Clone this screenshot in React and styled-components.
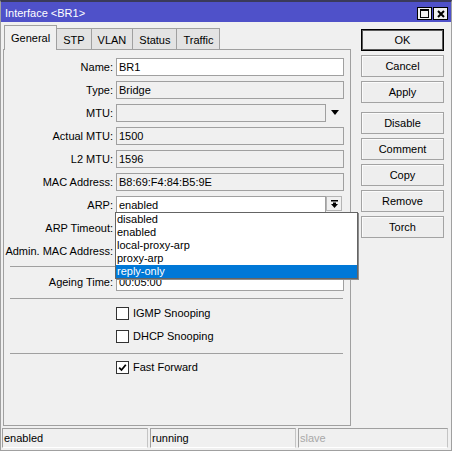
import React from "react";
import styled, { createGlobalStyle } from "styled-components";

const GlobalStyle = createGlobalStyle`
  html, body { margin: 0; padding: 0; background: #f0f0f0; }
  body {
    font-family: "Liberation Sans", Arial, sans-serif;
    font-size: 11px;
    color: #000;
  }
  * { box-sizing: border-box; }
`;

const Window = styled.div`
  width: 452px;
  height: 451px;
  background: #f0f0f0;
  border: 1px solid #a0a0a0;
  border-top: 2px solid #3a3a5a;
  display: flex;
  flex-direction: column;
`;

const TitleBar = styled.div`
  height: 20px;
  flex: none;
  background: #4f51c9;
  color: #fff;
  display: flex;
  align-items: flex-end;
  justify-content: space-between;
  padding: 0 3px 2px 4px;
`;

const Title = styled.span`
  line-height: 14px;
`;

const TitleButtons = styled.div`
  display: flex;
  gap: 1px;
`;

const TitleButton = styled.div`
  width: 15px;
  height: 13px;
  background: #f0f0f0;
  border: 1px solid #000;
  display: flex;
  align-items: center;
  justify-content: center;
`;

const Body = styled.div`
  flex: none;
  display: flex;
  padding: 3px 0 0 2px;
`;

const LeftColumn = styled.div`
  width: 348px;
  display: flex;
  flex-direction: column;
`;

const TabBar = styled.div`
  height: 24px;
  display: flex;
  align-items: flex-end;
  padding-left: 2px;
`;

const Tab = styled.div`
  height: ${(p) => (p.$active ? 25 : 21)}px;
  margin-bottom: ${(p) => (p.$active ? -1 : 0)}px;
  margin-left: -1px;
  padding: ${(p) => (p.$active ? "0 6px" : "2px 6px 0")};
  border: 1px solid #a0a0a0;
  border-bottom: none;
  background: ${(p) => (p.$active ? "#f0f0f0" : "#e3e3e3")};
  display: flex;
  align-items: center;
  white-space: nowrap;
  position: relative;
  z-index: ${(p) => (p.$active ? 2 : 1)};
`;

const Panel = styled.div`
  height: 377px;
  border: 1px solid #a0a0a0;
  padding-top: 8px;
  display: flex;
  flex-direction: column;
  gap: 5px;
`;

const Row = styled.div`
  display: flex;
  align-items: flex-start;
  height: 18px;
`;

const Label = styled.div`
  width: 109px;
  margin-right: 3px;
  text-align: right;
  line-height: 18px;
  white-space: nowrap;
`;

const FieldArea = styled.div`
  width: 228px;
  display: flex;
  align-items: flex-start;
  position: relative;
`;

const Field = styled.div`
  flex: 1;
  height: 18px;
  border: 1px solid #a0a0a0;
  background: ${(p) => (p.$editable ? "#fff" : "#f0f0f0")};
  padding: 0 2px;
  line-height: 16px;
  white-space: nowrap;
  overflow: hidden;
`;

const ArrowSlot = styled.div`
  width: 18px;
  height: 18px;
  display: flex;
  align-items: center;
  justify-content: center;
  padding-bottom: 2px;
`;

const DropButton = styled.div`
  width: 16px;
  height: 15px;
  margin-right: 2px;
  border: 1px solid #b4b4b4;
  background: #f0f0f0;
  display: flex;
  align-items: center;
  justify-content: center;
`;

const DropList = styled.ul`
  position: absolute;
  top: 16px;
  left: -1px;
  width: 243px;
  margin: 0;
  padding: 0;
  list-style: none;
  background: #fff;
  border: 1px solid #646464;
  box-shadow: 1px 1px 0 #8c8c8c;
  z-index: 10;
`;

const DropItem = styled.li`
  height: 13px;
  line-height: 13px;
  padding-left: 1px;
  white-space: nowrap;
  background: ${(p) => (p.$selected ? "#0078d7" : "transparent")};
  color: ${(p) => (p.$selected ? "#fff" : "#000")};
`;

const Separator = styled.div`
  height: 1px;
  background: #a0a0a0;
  margin: ${(p) => p.$mt}px 7px ${(p) => p.$mb}px 6px;
`;

const CheckRow = styled.div`
  height: 18px;
  display: flex;
  align-items: flex-start;
  gap: 4px;
  padding-left: 112px;
`;

const CheckBox = styled.div`
  width: 13px;
  height: 13px;
  border: 1px solid #333;
  background: #fff;
  display: flex;
  align-items: center;
  justify-content: center;
`;

const CheckLabel = styled.span`
  line-height: 13px;
`;

const RightColumn = styled.div`
  width: 83px;
  margin-left: 10px;
  padding-top: 4px;
  display: flex;
  flex-direction: column;
  gap: 4px;
`;

const Button = styled.div`
  height: 22px;
  margin-top: ${(p) => (p.$spaced ? 5 : 0)}px;
  border: 1px solid ${(p) => (p.$default ? "#000" : "#a3a3a3")};
  box-shadow: ${(p) => (p.$default ? "inset 0 0 0 1px #5a5a5a" : "inset 1px 1px 0 #fbfbfb")};
  background: #eeeeee;
  display: flex;
  align-items: center;
  justify-content: center;
`;

const StatusBar = styled.div`
  flex: none;
  height: 20px;
  margin-top: 2px;
  padding: 0 3px 0 1px;
  display: grid;
  grid-template-columns: 146px 146px 1fr;
  gap: 2px;
`;

const StatusCell = styled.div`
  border: 1px solid;
  border-color: #a0a0a0 #c4c4c4 #ffffff #a0a0a0;
  padding-left: 1px;
  line-height: 18px;
  color: ${(p) => (p.$dim ? "#a8a8a8" : "#000")};
`;

const MaximizeIcon = () => (
  <svg width="9" height="9" viewBox="0 0 9 9">
    <rect x="0.5" y="0.5" width="8" height="8" fill="none" stroke="#000" />
    <rect x="0" y="0" width="9" height="2" fill="#000" />
  </svg>
);

const CloseIcon = () => (
  <svg width="8" height="8" viewBox="0 0 8 8">
    <path d="M1 1 L7 7 M7 1 L1 7" stroke="#000" strokeWidth="2" />
  </svg>
);

const DownTriangle = () => (
  <svg width="8" height="5" viewBox="0 0 8 5">
    <polygon points="0,0 8,0 4,5" fill="#000" />
  </svg>
);

const BarArrow = () => (
  <svg width="7" height="8" viewBox="0 0 7 8">
    <rect x="0" y="0" width="7" height="1.5" fill="#000" />
    <rect x="2" y="2.5" width="3" height="2" fill="#000" />
    <polygon points="0,4 7,4 3.5,8" fill="#000" />
  </svg>
);

const CheckMark = () => (
  <svg width="9" height="9" viewBox="0 0 9 9">
    <path d="M1.2 4.6 L3.5 7 L7.8 1.8" fill="none" stroke="#000" strokeWidth="1.8" />
  </svg>
);

const tabs = ["General", "STP", "VLAN", "Status", "Traffic"];
const arpOptions = ["disabled", "enabled", "local-proxy-arp", "proxy-arp", "reply-only"];
const buttons = [
  { label: "OK", def: true },
  { label: "Cancel" },
  { label: "Apply" },
  { label: "Disable", spaced: true },
  { label: "Comment" },
  { label: "Copy" },
  { label: "Remove" },
  { label: "Torch" },
];

const TextRow = ({ label, value, editable }) => (
  <Row>
    <Label>{label}</Label>
    <FieldArea>
      <Field $editable={editable}>{value}</Field>
    </FieldArea>
  </Row>
);

const CheckOption = ({ label, checked }) => (
  <CheckRow>
    <CheckBox>{checked && <CheckMark />}</CheckBox>
    <CheckLabel>{label}</CheckLabel>
  </CheckRow>
);

export default function App() {
  return (
    <>
      <GlobalStyle />
      <Window>
        <TitleBar>
          <Title>Interface &lt;BR1&gt;</Title>
          <TitleButtons>
            <TitleButton>
              <MaximizeIcon />
            </TitleButton>
            <TitleButton>
              <CloseIcon />
            </TitleButton>
          </TitleButtons>
        </TitleBar>
        <Body>
          <LeftColumn>
            <TabBar>
              {tabs.map((t, i) => (
                <Tab key={t} $active={i === 0}>
                  {t}
                </Tab>
              ))}
            </TabBar>
            <Panel>
              <TextRow label="Name:" value="BR1" editable />
              <TextRow label="Type:" value="Bridge" />
              <Row>
                <Label>MTU:</Label>
                <FieldArea>
                  <Field />
                  <ArrowSlot>
                    <DownTriangle />
                  </ArrowSlot>
                </FieldArea>
              </Row>
              <TextRow label="Actual MTU:" value="1500" />
              <TextRow label="L2 MTU:" value="1596" />
              <TextRow label="MAC Address:" value="B8:69:F4:84:B5:9E" />
              <Row>
                <Label>ARP:</Label>
                <FieldArea>
                  <Field $editable>enabled</Field>
                  <DropButton>
                    <BarArrow />
                  </DropButton>
                  <DropList>
                    {arpOptions.map((o) => (
                      <DropItem key={o} $selected={o === "reply-only"}>
                        {o}
                      </DropItem>
                    ))}
                  </DropList>
                </FieldArea>
              </Row>
              <TextRow label="ARP Timeout:" value="" />
              <TextRow label="Admin. MAC Address:" value="" />
              <Separator $mt={1} $mb={1} />
              <TextRow label="Ageing Time:" value="00:05:00" editable />
              <Separator $mt={2} $mb={3} />
              <CheckOption label="IGMP Snooping" />
              <CheckOption label="DHCP Snooping" />
              <Separator $mt={0} $mb={2} />
              <CheckOption label="Fast Forward" checked />
            </Panel>
          </LeftColumn>
          <RightColumn>
            {buttons.map((b) => (
              <Button key={b.label} $default={b.def} $spaced={b.spaced}>
                {b.label}
              </Button>
            ))}
          </RightColumn>
        </Body>
        <StatusBar>
          <StatusCell>enabled</StatusCell>
          <StatusCell>running</StatusCell>
          <StatusCell $dim>slave</StatusCell>
        </StatusBar>
      </Window>
    </>
  );
}
